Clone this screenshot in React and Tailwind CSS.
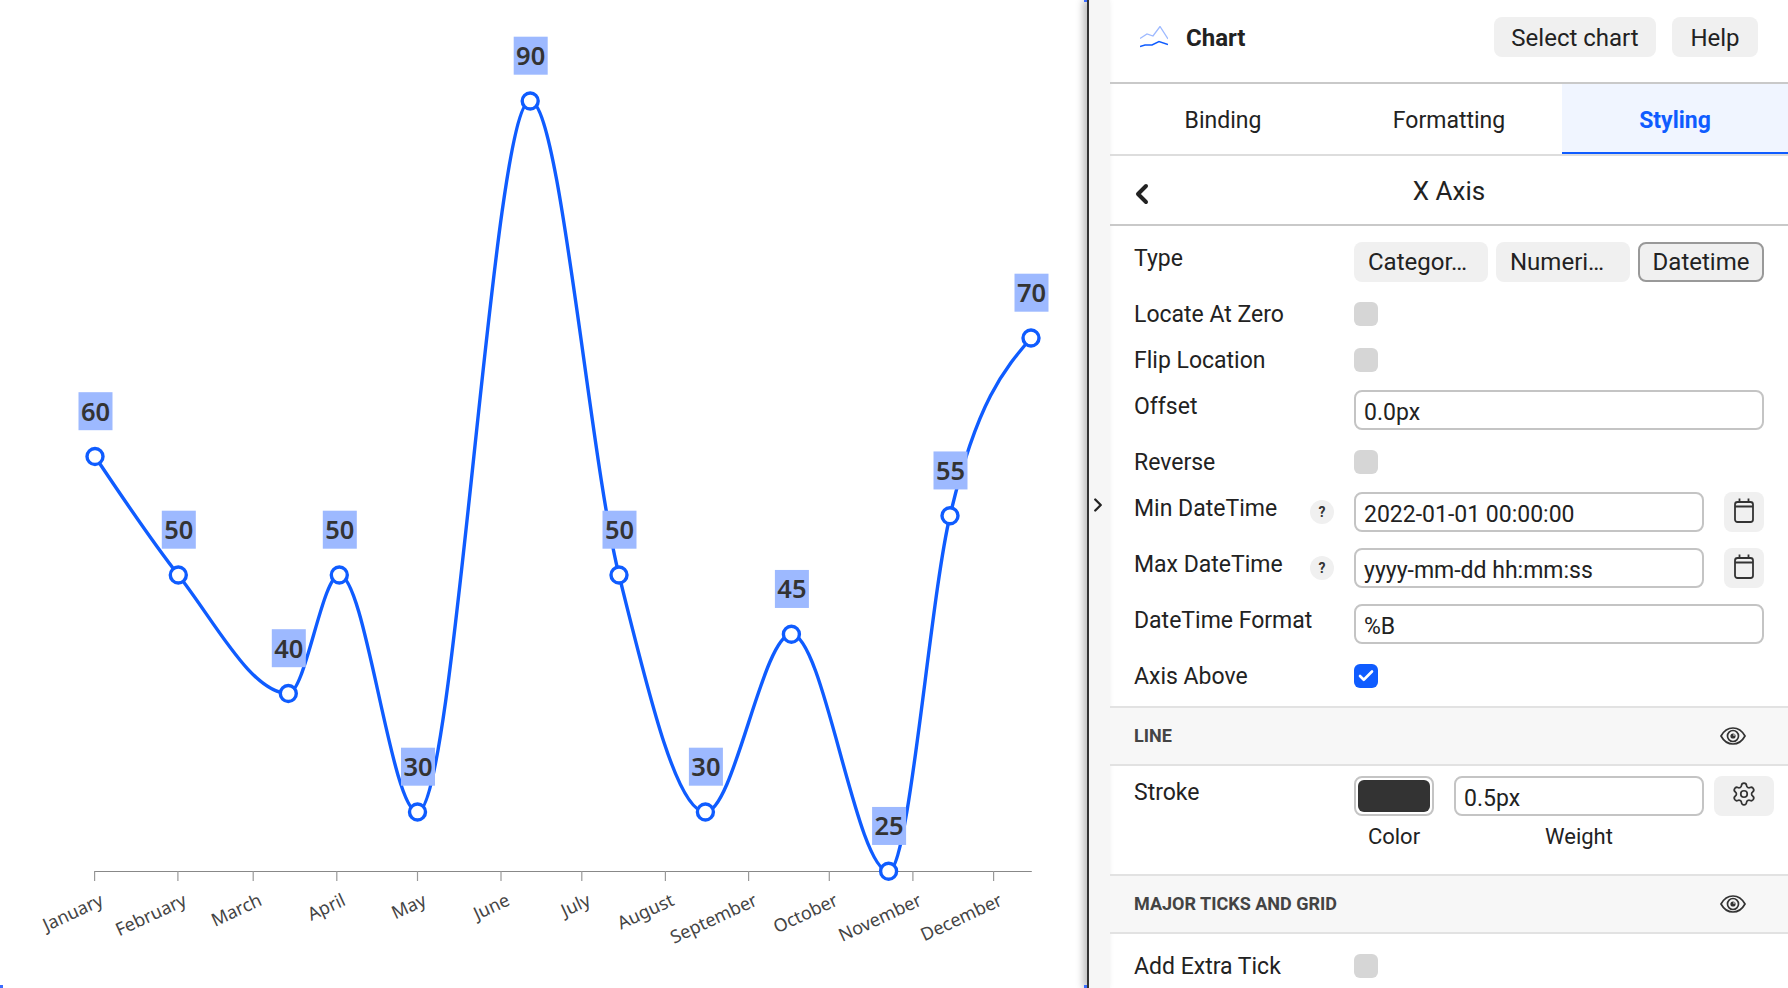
import React from 'react';
import { Settings, ChevronLeft, ChevronRight, Check } from 'lucide-react';

const points = [
  { x: 95, v: 60 }, { x: 178.3, v: 50 }, { x: 288.3, v: 40 }, { x: 339.3, v: 50 },
  { x: 417.5, v: 30 }, { x: 530.2, v: 90 }, { x: 619, v: 50 }, { x: 705.4, v: 30 },
  { x: 791.4, v: 45 }, { x: 888.6, v: 25 }, { x: 950, v: 55 }, { x: 1031, v: 70 },
].map((p) => ({ ...p, y: 575 + (50 - p.v) * 11.85 }));

const ticks = [
  { x: 94.6, label: 'January' }, { x: 177.9, label: 'February' }, { x: 253.2, label: 'March' },
  { x: 336.8, label: 'April' }, { x: 417.5, label: 'May' }, { x: 501, label: 'June' },
  { x: 581.8, label: 'July' }, { x: 665.4, label: 'August' }, { x: 748.6, label: 'September' },
  { x: 829.3, label: 'October' }, { x: 912.9, label: 'November' }, { x: 993.6, label: 'December' },
];

// same tangents as d3 curveMonotoneX, flat at every local peak and dip
const monotonePath = (pts) => {
  const n = pts.length;
  const slope = [];
  for (let i = 0; i < n - 1; i++) slope.push((pts[i + 1].y - pts[i].y) / (pts[i + 1].x - pts[i].x));
  const tangent = pts.map((_, i) => {
    if (i === 0 || i === n - 1) return null;
    const h0 = pts[i].x - pts[i - 1].x;
    const h1 = pts[i + 1].x - pts[i].x;
    const s0 = slope[i - 1];
    const s1 = slope[i];
    const p = (s0 * h1 + s1 * h0) / (h0 + h1);
    return (Math.sign(s0) + Math.sign(s1)) * Math.min(Math.abs(s0), Math.abs(s1), 0.5 * Math.abs(p)) || 0;
  });
  tangent[0] = (3 * slope[0] - tangent[1]) / 2;
  tangent[n - 1] = (3 * slope[n - 2] - tangent[n - 2]) / 2;
  let d = `M${pts[0].x} ${pts[0].y}`;
  for (let i = 0; i < n - 1; i++) {
    const dx = (pts[i + 1].x - pts[i].x) / 3;
    d += `C${pts[i].x + dx} ${pts[i].y + dx * tangent[i]} ${pts[i + 1].x - dx} ${pts[i + 1].y - dx * tangent[i + 1]} ${pts[i + 1].x} ${pts[i + 1].y}`;
  }
  return d;
};

const ChartArea = () => (
  <svg width="1087" height="988" className="block">
    <line x1="94.6" y1="871.5" x2="1031.8" y2="871.5" stroke="#888" strokeWidth="1.2" />
    {ticks.map((t) => (
      <g key={t.label}>
        <line x1={t.x} y1="871" x2={t.x} y2="881" stroke="#999" strokeWidth="1.2" />
        <text
          x={t.x + 10}
          y="904.5"
          textAnchor="end"
          transform={`rotate(-25 ${t.x + 10} 904.5)`}
          fontFamily='"Noto Sans", sans-serif'
          fontSize="18"
          fill="#444"
        >
          {t.label}
        </text>
      </g>
    ))}
    <path d={monotonePath(points)} fill="none" stroke="#0f5cff" strokeWidth="3.4" />
    {points.map((p) => (
      <g key={p.x}>
        <circle cx={p.x} cy={p.y} r="8" fill="#fff" stroke="#0f5cff" strokeWidth="3.4" />
        <rect x={p.x - 16.5} y={p.y - 64.3} width="34" height="38" fill="#9db9ff" />
        <text
          x={p.x + 0.5}
          y={p.y - 36}
          textAnchor="middle"
          fontFamily='"Noto Sans", sans-serif'
          fontSize="25.5"
          fontWeight="600"
          fill="#333"
        >
          {p.v}
        </text>
      </g>
    ))}
  </svg>
);

const ChartLogo = () => (
  <svg width="28" height="22" viewBox="0 0 28 22" fill="none">
    <path d="M0 12.5 L7 8 L13 10 L20 0.5 L28 13" stroke="#9db9ff" strokeWidth="1.3" />
    <path d="M0 20.5 L5 19 L12 19 L19 15.5 L28 18.5" stroke="#0f5cff" strokeWidth="1.4" />
  </svg>
);

const CalendarIcon = () => (
  <svg width="20" height="25" viewBox="0 0 20 25" fill="none" stroke="#333" strokeWidth="1.8" className="-mt-1">
    <rect x="1" y="4" width="18" height="20" rx="2.5" />
    <path d="M1 8.500H19M5.500 0.500V4M14.500 0.500V4" />
  </svg>
);

const EyeIcon = () => (
  <svg width="26" height="18" viewBox="0 0 26 18" fill="none" stroke="#333" strokeWidth="1.7">
    <path d="M1 9C4 3.500 8 1 13 1s9 2.500 12 8c-3 5.500-7 8-12 8S4 14.500 1 9Z" />
    <circle cx="13" cy="9" r="5.500" />
    <circle cx="13" cy="9" r="2.600" fill="#333" stroke="none" />
    <circle cx="14" cy="8" r="0.800" fill="#fff" stroke="none" />
  </svg>
);

const Label = ({ children }) => (
  <span className="w-[220px] shrink-0 text-[23px] leading-[32px] text-[#222] translate-y-[1px]">{children}</span>
);

const CheckRow = ({ label, checked, className }) => (
  <div className={`flex items-center h-6 ${className}`}>
    <Label>{label}</Label>
    {checked ? (
      <span className="w-6 h-6 rounded-md bg-[#0f5cff] flex items-center justify-center text-white">
        <Check size={18} strokeWidth={3.5} />
      </span>
    ) : (
      <span className="w-6 h-6 rounded-md bg-[#d6d6d6]" />
    )}
  </div>
);

const TextBox = ({ value, className }) => (
  <div className={`h-10 shrink-0 border-2 border-[#c4c4c4] rounded-lg px-2 flex items-center text-[23px] text-[#222] ${className}`}>
    <span className="translate-y-[3px]">{value}</span>
  </div>
);

const GrayButton = ({ children, className }) => (
  <button className={`h-10 shrink-0 rounded-lg bg-[#f0f0f0] flex items-center justify-center text-[24px] text-[#222] ${className}`}>
    {children}
  </button>
);

const Help = () => (
  <span className="absolute left-[176px] top-2 w-6 h-6 rounded-full bg-[#f0f0f0] flex items-center justify-center text-[14px] font-bold text-[#333]">
    ?
  </span>
);

const DateRow = ({ label, value, className }) => (
  <div className={`relative flex h-10 ${className}`}>
    <Label>{label}</Label>
    <Help />
    <TextBox value={value} className="w-[350px]" />
    <GrayButton className="w-10 ml-5">
      <CalendarIcon />
    </GrayButton>
  </div>
);

const SectionHeader = ({ title }) => (
  <div className="h-[60px] border-y-2 border-[#e2e2e2] bg-[#f7f7f7] flex items-center justify-between pl-6 pr-[42px]">
    <span className="text-[18px] font-bold text-[#444] pb-[2px]">{title}</span>
    <EyeIcon />
  </div>
);

const Panel = () => (
  <div className="flex-1 h-full flex flex-col overflow-hidden">
    <div className="h-[84px] shrink-0 border-b-2 border-[#c9c9c9] flex items-center px-[30px] pb-[8px]">
      <ChartLogo />
      <span className="ml-[18px] pt-[2px] text-[24px] font-bold text-[#222]">Chart</span>
      <button className="ml-auto w-[162px] h-10 pt-[2px] rounded-lg bg-[#f0f0f0] text-[24px] text-[#222]">Select chart</button>
      <button className="ml-4 w-[86px] h-10 pt-[2px] rounded-lg bg-[#f0f0f0] text-[24px] text-[#222]">Help</button>
    </div>
    <div className="h-[72px] shrink-0 border-b-2 border-[#dddddd] grid grid-cols-3 text-[23px] text-[#222]">
      <div className="flex items-center justify-center pt-[5px]">Binding</div>
      <div className="flex items-center justify-center pt-[5px]">Formatting</div>
      <div className="flex items-center justify-center pt-[7px] bg-[#f0f5ff] border-b-2 border-[#0f5cff] font-bold text-[#0f5cff]">Styling</div>
    </div>
    <div className="relative h-[70px] shrink-0 pt-[2px] border-b-2 border-[#c9c9c9] flex items-center justify-center text-[26px] text-[#222]">
      <ChevronLeft size={32} strokeWidth={3} className="absolute left-[16px] top-[22px]" />
      X Axis
    </div>
    <div className="flex-1 flex flex-col">
      <div className="px-6">
        <div className="flex h-10 mt-4">
          <Label>Type</Label>
          <GrayButton className="w-[134px] justify-start pl-[14px]">Categor…</GrayButton>
          <GrayButton className="w-[134px] ml-2 justify-start pl-[14px]">Numeri…</GrayButton>
          <GrayButton className="w-[126px] ml-2 border-2 border-[#999]">Datetime</GrayButton>
        </div>
        <CheckRow label="Locate At Zero" className="mt-5" />
        <CheckRow label="Flip Location" className="mt-[22px]" />
        <div className="flex h-10 mt-[18px]">
          <Label>Offset</Label>
          <TextBox value="0.0px" className="w-[410px]" />
        </div>
        <CheckRow label="Reverse" className="mt-5" />
        <DateRow label="Min DateTime" value="2022-01-01 00:00:00" className="mt-[18px]" />
        <DateRow label="Max DateTime" value="yyyy-mm-dd hh:mm:ss" className="mt-4" />
        <div className="flex h-10 mt-4">
          <Label>DateTime Format</Label>
          <TextBox value="%B" className="w-[410px]" />
        </div>
        <CheckRow label="Axis Above" checked className="mt-5" />
      </div>
      <div className="mt-[18px]">
        <SectionHeader title="LINE" />
      </div>
      <div className="px-6 h-[108px] shrink-0">
        <div className="flex h-10 mt-[10px]">
          <Label>Stroke</Label>
          <div className="w-20 h-10 shrink-0 border-2 border-[#c4c4c4] rounded-lg p-[2px]">
            <div className="w-full h-full rounded-md bg-[#333]" />
          </div>
          <TextBox value="0.5px" className="w-[250px] ml-[20px]" />
          <GrayButton className="w-[60px] ml-[10px]">
            <Settings size={26} strokeWidth={1.6} color="#333" className="-mt-1" />
          </GrayButton>
        </div>
        <div className="flex mt-[5px] text-[22px] leading-[32px] text-[#222]">
          <span className="w-[220px] shrink-0" />
          <span className="w-20 shrink-0 text-center">Color</span>
          <span className="w-[250px] shrink-0 ml-[20px] text-center">Weight</span>
        </div>
      </div>
      <SectionHeader title="MAJOR TICKS AND GRID" />
      <div className="px-6">
        <CheckRow label="Add Extra Tick" className="mt-5" />
      </div>
    </div>
  </div>
);

export default function App() {
  return (
    <div className="relative flex w-[1788px] h-[988px] overflow-hidden bg-white" style={{ fontFamily: 'Roboto, sans-serif' }}>
      <div className="w-[1087px] h-full shrink-0">
        <ChartArea />
      </div>
      <div className="w-[23px] h-full shrink-0 bg-[#f6f6f6] border-l-2 border-[#333] shadow-[-4px_0_7px_rgba(0,0,0,0.25)] flex items-center">
        <ChevronRight size={22} strokeWidth={2.5} color="#222" className="-ml-[2px] mt-[22px]" />
      </div>
      <Panel />
      {/* corner handles of the selected chart */}
      <span className="absolute left-0 bottom-0 w-[3px] h-[3px] bg-[#3b6cff]" />
      <span className="absolute left-[1084px] bottom-0 w-[3px] h-[3px] bg-[#3b6cff]" />
      <span className="absolute left-[1084px] top-0 w-[3px] h-[2px] bg-[#3b6cff]" />
    </div>
  );
}
